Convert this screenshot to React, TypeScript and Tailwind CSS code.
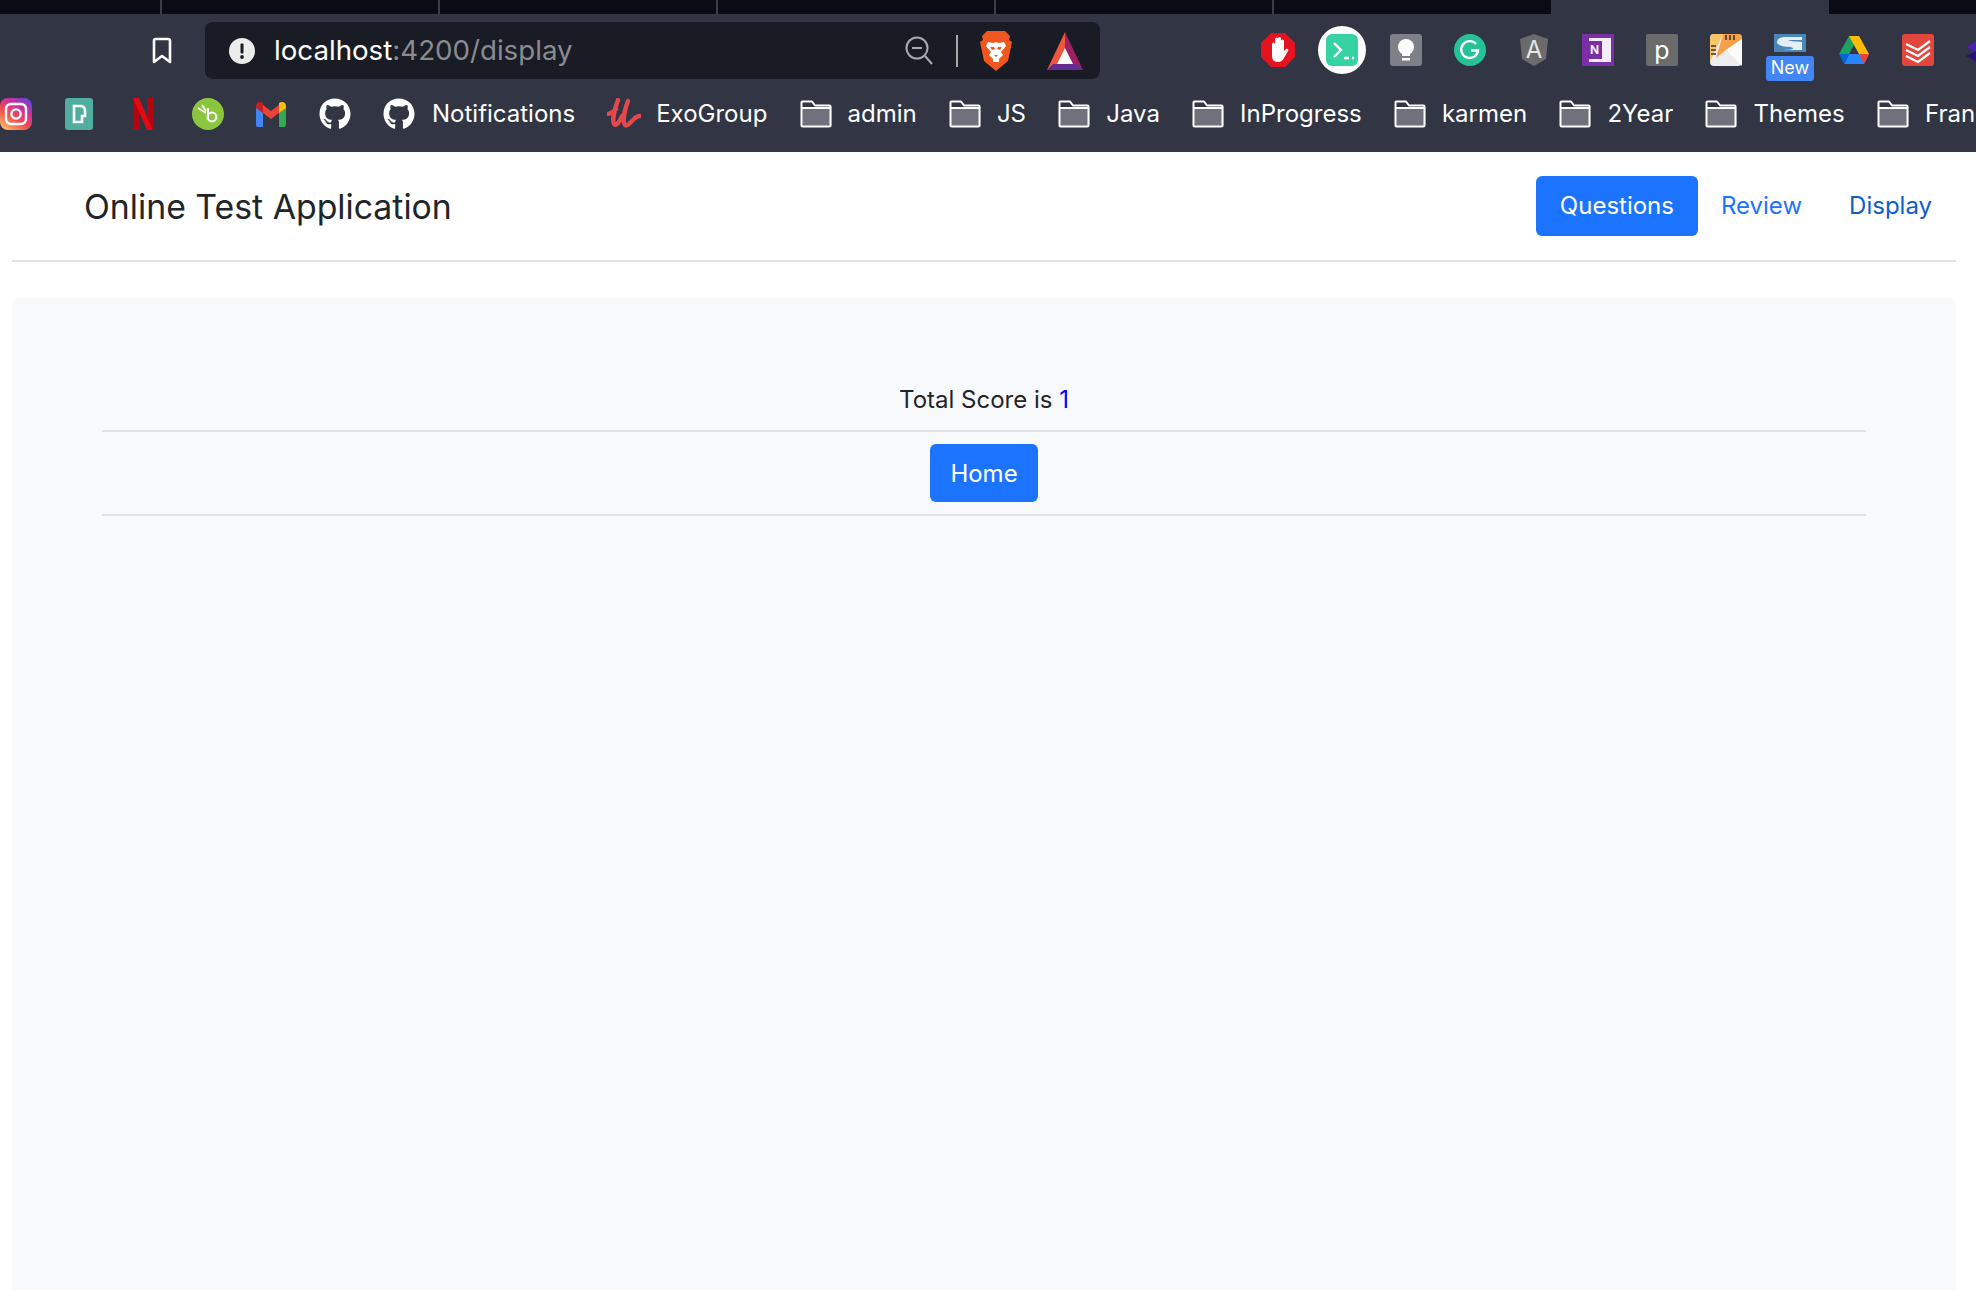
import { FaGithub } from "react-icons/fa";

const font = { fontFamily: "Inter, 'Liberation Sans', sans-serif" };

const Folder = () => (
  <svg width="32" height="28" viewBox="0 0 32 28" className="shrink-0">
    <path d="M1.5 26.5V2.5a1 1 0 0 1 1-1h9.5l3 4h15.5a1 1 0 0 1 1 1v20z" fill="#6f717c" />
    <path d="M2 2h10l3 4h15v2H2z" fill="#323544" />
    <path
      d="M2.5 26.5a1 1 0 0 1-1-1V2.5a1 1 0 0 1 1-1h9.5l3 4h14.5a1 1 0 0 1 1 1v19a1 1 0 0 1-1 1zM1.5 8h29"
      fill="none"
      stroke="#fff"
      strokeWidth="2"
      strokeLinejoin="round"
    />
  </svg>
);

const Instagram = () => (
  <svg width="32" height="32" viewBox="0 0 32 32">
    <defs>
      <linearGradient id="ig" x1="0.1" y1="1" x2="0.8" y2="0">
        <stop offset="0" stopColor="#fdc468" />
        <stop offset="0.4" stopColor="#f0504f" />
        <stop offset="0.7" stopColor="#d22e9b" />
        <stop offset="1" stopColor="#6a45d0" />
      </linearGradient>
    </defs>
    <rect x="0" y="0" width="32" height="32" rx="8" fill="url(#ig)" />
    <rect x="6" y="6" width="20" height="20" rx="5" fill="none" stroke="#fff" strokeWidth="2.4" />
    <circle cx="16" cy="16" r="4.6" fill="none" stroke="#fff" strokeWidth="2.4" />
  </svg>
);

const Teal = () => (
  <svg width="28" height="32" viewBox="0 0 28 32">
    <rect width="28" height="32" rx="3" fill="#4fae9f" />
    <path d="M9 8h7a5 5 0 0 1 4 5v5h-3v6H9z" fill="none" stroke="#fff" strokeWidth="2.6" />
  </svg>
);

const Netflix = () => (
  <svg width="20" height="32" viewBox="0 0 20 32">
    <path d="M0 0h6v32l-6 1z" fill="#b1060f" />
    <path d="M14 0h6v33l-6-1z" fill="#b1060f" />
    <path d="M0 0h6l14 33-6-1z" fill="#e50914" />
  </svg>
);

const Bonsai = () => (
  <svg width="32" height="32" viewBox="0 0 32 32">
    <circle cx="16" cy="16" r="16" fill="#8cc63f" />
    <path d="M16 10v11" stroke="#fff" strokeWidth="2" />
    <circle cx="20" cy="19" r="4.4" fill="none" stroke="#fff" strokeWidth="2" />
    <path d="M6 10l8 5M10 7l4 6" stroke="#fff" strokeWidth="1.6" />
  </svg>
);

const Gmail = () => (
  <svg width="30" height="28" viewBox="0 0 30 28">
    <path d="M0 6v19a2 2 0 0 0 2 2h5V13z" fill="#4285f4" />
    <path d="M30 6v19a2 2 0 0 1-2 2h-5V13z" fill="#34a853" />
    <path d="M7 13l8 6 8-6V5l-8 6-8-6z" fill="#ea4335" />
    <path d="M0 6c0-4 4-5 7-3v10L0 8z" fill="#c5221f" />
    <path d="M30 6c0-4-4-5-7-3v10l7-5z" fill="#fbbc04" />
  </svg>
);

const Udemy = () => (
  <svg width="34" height="32" viewBox="0 0 34 32">
    <path
      d="M1 16c3-1 6-2 8-5M11 2C8 10 5 22 7 26c2 3 6-3 8-8M21 3c-3 8-6 20-3 24 2 2 6-3 9-6 2-2 4-3 6-3"
      fill="none"
      stroke="#e4484c"
      strokeWidth="4.4"
      strokeLinecap="round"
    />
  </svg>
);

const BraveLion = () => (
  <svg width="32" height="40" viewBox="0 0 32 40">
    <path d="M7 0h18l5 5-1 4 3 2-4 19-12 10L4 30 0 11l3-2-1-4z" fill="#f1561f" />
    <path d="M8 11l5 1 3-1 3 1 5-1 2 4-5 6 2 3-4 4v3h-6v-3l-4-4 2-3-5-6z" fill="#fff" />
    <path d="M10 16h4l1 2-3 1zM22 16h-4l-1 2 3 1zM14 24h4l-2 2z" fill="#f1561f" />
  </svg>
);

const Bat = () => (
  <svg width="36" height="38" viewBox="0 0 36 38">
    <path d="M18 0L0 38h18z" fill="#f1563a" />
    <path d="M18 0l18 38H18z" fill="#9e1f63" />
    <path d="M0 38l6-6h24l6 6z" fill="#662d91" />
    <path d="M18 16l8 16H10z" fill="#fff" />
  </svg>
);

const ext = "flex h-[57px] w-[64px] shrink-0 items-center justify-center";

const bookmarks = ["admin", "JS", "Java", "InProgress", "karmen", "2Year", "Themes", "Fran"];

const Navbar = () => (
  <div className="ml-[12px] mr-[20px] flex h-[110px] items-center justify-between border-b-2 border-[#dee2e6] pl-[72px] pr-[24px]">
    <span className="mt-[2px] text-[33.8px] leading-none text-[#212529]">Online Test Application</span>
    <div className="flex items-center text-[24px]">
      <a className="flex h-[60px] items-center rounded-[6px] bg-[#1c74fe] px-[24px] text-white">Questions</a>
      <a className="flex h-[60px] items-center px-[23px] text-[#1c74fe]">Review</a>
      <a className="flex h-[60px] items-center pl-[24px] text-[#0f5ccb]">Display</a>
    </div>
  </div>
);

export default function App() {
  return (
    <div className="h-[1290px] w-[1976px] overflow-hidden bg-white" style={font}>
      {/* tab strip */}
      <div className="flex h-[14px] bg-[#0a0b14]">
        <div className="w-[162px] border-r-2 border-[#3a3c48]" />
        <div className="w-[278px] border-r-2 border-[#3a3c48]" />
        <div className="w-[278px] border-r-2 border-[#3a3c48]" />
        <div className="w-[278px] border-r-2 border-[#3a3c48]" />
        <div className="w-[278px] border-r-2 border-[#3a3c48]" />
        <div className="ml-[277px] w-[278px] bg-[#323544]" />
      </div>

      <div className="h-[138px] overflow-hidden bg-[#323544]">
        {/* toolbar */}
        <div className="flex h-[65px] items-center pt-[8px]">
          <div className="flex w-[205px] shrink-0 justify-end pr-[33px]">
            <svg width="20" height="28" viewBox="0 0 20 28">
              <path
                d="M2 4a2 2 0 0 1 2-2h12a2 2 0 0 1 2 2v21l-8-6-8 6z"
                fill="none"
                stroke="#fff"
                strokeWidth="2.6"
                strokeLinejoin="round"
              />
            </svg>
          </div>
          <div className="flex h-[57px] w-[895px] shrink-0 items-center rounded-[8px] bg-[#191c24] pl-[24px] pr-[17px]">
            <svg width="26" height="26" viewBox="0 0 26 26" className="shrink-0">
              <circle cx="13" cy="13" r="13" fill="#ececec" />
              <rect x="11.5" y="5.5" width="3" height="10" rx="1" fill="#191c24" />
              <circle cx="13" cy="19" r="1.9" fill="#191c24" />
            </svg>
            <span className="ml-[19px] text-[27.7px] text-white">
              localhost<span className="text-[#8a8b90]">:4200/display</span>
            </span>
            <svg width="28" height="30" viewBox="0 0 28 30" className="ml-auto" fill="none" stroke="#a9a9ab" strokeWidth="2">
              <circle cx="12" cy="12" r="10.5" />
              <path d="M7 12h10" />
              <path d="M20 20l7 8" />
            </svg>
            <div className="ml-[23px] h-[32px] w-[2px] bg-[#a9a9ab]" />
            <div className="ml-[22px] flex items-center">
              <BraveLion />
            </div>
            <div className="ml-[35px] flex items-center">
              <Bat />
            </div>
          </div>
          <div className="ml-[146px] -mt-[1px] flex">
            <div className={ext}>
              <svg width="34" height="34" viewBox="0 0 34 34">
                <path d="M10 0h14l10 10v14L24 34H10L0 24V10z" fill="#e3141f" />
                <path d="M11 11a1.5 1.5 0 0 1 3 0V6a1.5 1.5 0 0 1 3 0v-.5a1.5 1.5 0 0 1 3 0V8a1.5 1.5 0 0 1 3 0v10l2-2c2-1 3 1 2 2l-4 7c-1 2-3 4-6 4-5 0-6-3-6-7z" fill="#fff" />
              </svg>
            </div>
            <div className={ext}>
              <div className="flex h-[48px] w-[48px] items-center justify-center rounded-full bg-white">
                <svg width="32" height="32" viewBox="0 0 32 32">
                  <rect width="32" height="32" rx="6" fill="#36d2a4" />
                  <path d="M8 9l7 7-7 7" fill="none" stroke="#fff" strokeWidth="2.4" />
                  <path d="M18 24h5M26 24h2" stroke="#fff" strokeWidth="2.4" />
                </svg>
              </div>
            </div>
            <div className={ext}>
              <svg width="32" height="32" viewBox="0 0 32 32">
                <rect width="32" height="32" rx="3" fill="#7d8087" />
                <circle cx="16" cy="13" r="8" fill="#fff" />
                <rect x="12" y="19" width="8" height="3" fill="#fff" />
                <rect x="12" y="24" width="8" height="2.5" fill="#fff" />
              </svg>
            </div>
            <div className={ext}>
              <svg width="32" height="32" viewBox="0 0 32 32">
                <circle cx="16" cy="16" r="16" fill="#25c197" />
                <path d="M22 10a8.4 8.4 0 1 0 2 6.5h-7" fill="none" stroke="#fff" strokeWidth="2.4" />
              </svg>
            </div>
            <div className={ext}>
              <div className="relative flex h-[32px] w-[28px] items-center justify-center">
                <svg width="28" height="32" viewBox="0 0 28 32" className="absolute inset-0">
                  <path d="M14 0l14 5-2 20-12 7-12-7L0 5z" fill="#6b6b6b" />
                </svg>
                <span className="relative text-[24px] leading-none text-[#e6e6e6]">A</span>
              </div>
            </div>
            <div className={ext}>
              <div className="relative flex h-[32px] w-[32px] items-center bg-[#7a2fa5] pl-[5px]">
                <div className="absolute right-[3px] top-[4px] h-[24px] w-[22px] bg-[#f3edf7]" />
                <div className="relative flex h-[18px] w-[15px] items-center justify-center bg-[#7a2fa5] text-[12px] font-bold leading-none text-[#f3edf7]">
                  N
                </div>
              </div>
            </div>
            <div className={ext}>
              <div className="flex h-[32px] w-[32px] items-center justify-center rounded-[2px] bg-[#6b6b6b]">
                <span className="text-[25px] leading-none text-white">p</span>
              </div>
            </div>
            <div className={ext}>
              <svg width="32" height="32" viewBox="0 0 32 32">
                <rect width="32" height="32" rx="4" fill="#ededed" />
                <path d="M0 4a4 4 0 0 1 4-4h9L0 28z" fill="#f8c46b" />
                <path d="M13 0h15a4 4 0 0 1 4 4v1L16 16 6 24z" fill="#f7a04a" />
                <path d="M16 16l16 16V5z" fill="#fafafa" />
                <path d="M16 1v5M20 1v5M24 1v5M1 12h5M1 16h5M1 20h5" stroke="#3a3330" strokeWidth="1.6" />
              </svg>
            </div>
            <div className={ext + " relative"}>
              <svg width="32" height="18" viewBox="0 0 32 18" className="-mt-[15px]">
                <rect width="32" height="18" fill="#4a87b8" />
                <path d="M3 9c0-4 3-6 8-6h17v3H14c3 2 9 1 14 2v8H4c8 0 16 0 15-2-2-2-12 0-16-5z" fill="#e6eef5" />
              </svg>
              <div className="absolute left-[8px] top-[34px] flex h-[25px] w-[48px] items-center justify-center rounded-[3px] bg-[#4285f4] text-[18px] leading-none text-white">
                New
              </div>
            </div>
            <div className={ext}>
              <svg width="30" height="28" viewBox="0 0 30 28">
                <path d="M10 0h10L10 18H0z" fill="#1ba261" />
                <path d="M20 0l10 18H20L10 0z" fill="#fbbc04" />
                <path d="M5 28l5-10h20l-5 10z" fill="#2684fc" />
                <path d="M0 18h10L5 28z" fill="#0066da" />
                <path d="M30 18l-5 10-5-10z" fill="#ea4335" />
              </svg>
            </div>
            <div className={ext}>
              <svg width="32" height="32" viewBox="0 0 32 32">
                <rect width="32" height="32" rx="3" fill="#e2463c" />
                <path d="M4 10l12 6 12-9M4 16l12 6 12-9M4 22l12 6 12-9" fill="none" stroke="#fff" strokeWidth="2.2" />
              </svg>
            </div>
            <div className={ext}>
              <svg width="32" height="32" viewBox="0 0 32 32">
                <path d="M16 4l16 9-16 9L0 13z" fill="#4a20b5" />
                <path d="M16 14l16 8-16 9L0 22z" fill="#2a1370" />
              </svg>
            </div>
          </div>
        </div>

        {/* bookmarks bar */}
        <div className="flex h-[70px] items-center whitespace-nowrap text-[24px] leading-none text-white">
          <div className="flex w-[32px] shrink-0">
            <Instagram />
          </div>
          <div className="ml-[33px] flex w-[28px] shrink-0">
            <Teal />
          </div>
          <div className="ml-[40px] flex w-[20px] shrink-0">
            <Netflix />
          </div>
          <div className="ml-[39px] flex shrink-0">
            <Bonsai />
          </div>
          <div className="ml-[32px] flex shrink-0">
            <Gmail />
          </div>
          <div className="ml-[33px] flex shrink-0">
            <FaGithub size={32} />
          </div>
          <div className="ml-[32px] flex shrink-0 items-center gap-[17px]">
            <FaGithub size={32} />
            <span>Notifications</span>
          </div>
          <div className="ml-[32px] flex shrink-0 items-center gap-[15px]">
            <Udemy />
            <span>ExoGroup</span>
          </div>
          {bookmarks.map((name) => (
            <div key={name} className="ml-[32.2px] flex shrink-0 items-center gap-[16px]">
              <Folder />
              <span>{name}</span>
            </div>
          ))}
        </div>
      </div>

      <Navbar />

      {/* result panel */}
      <div className="ml-[12px] mr-[20px] mt-[36px] h-[1100px] rounded-[8px] bg-[#f8f9fa] px-[90px] pt-[84px]">
        <div className="border-b-2 border-[#dee2e6] pb-[12px] text-center text-[24px] leading-[36px] text-[#212529]">
          Total Score is <span className="text-[#0000ff]">1</span>
        </div>
        <div className="flex justify-center border-b-2 border-[#dee2e6] py-[12px]">
          <button className="h-[58px] w-[108px] rounded-[6px] bg-[#1c74fe] pt-[1px] text-[24px] text-white">Home</button>
        </div>
      </div>
    </div>
  );
}
